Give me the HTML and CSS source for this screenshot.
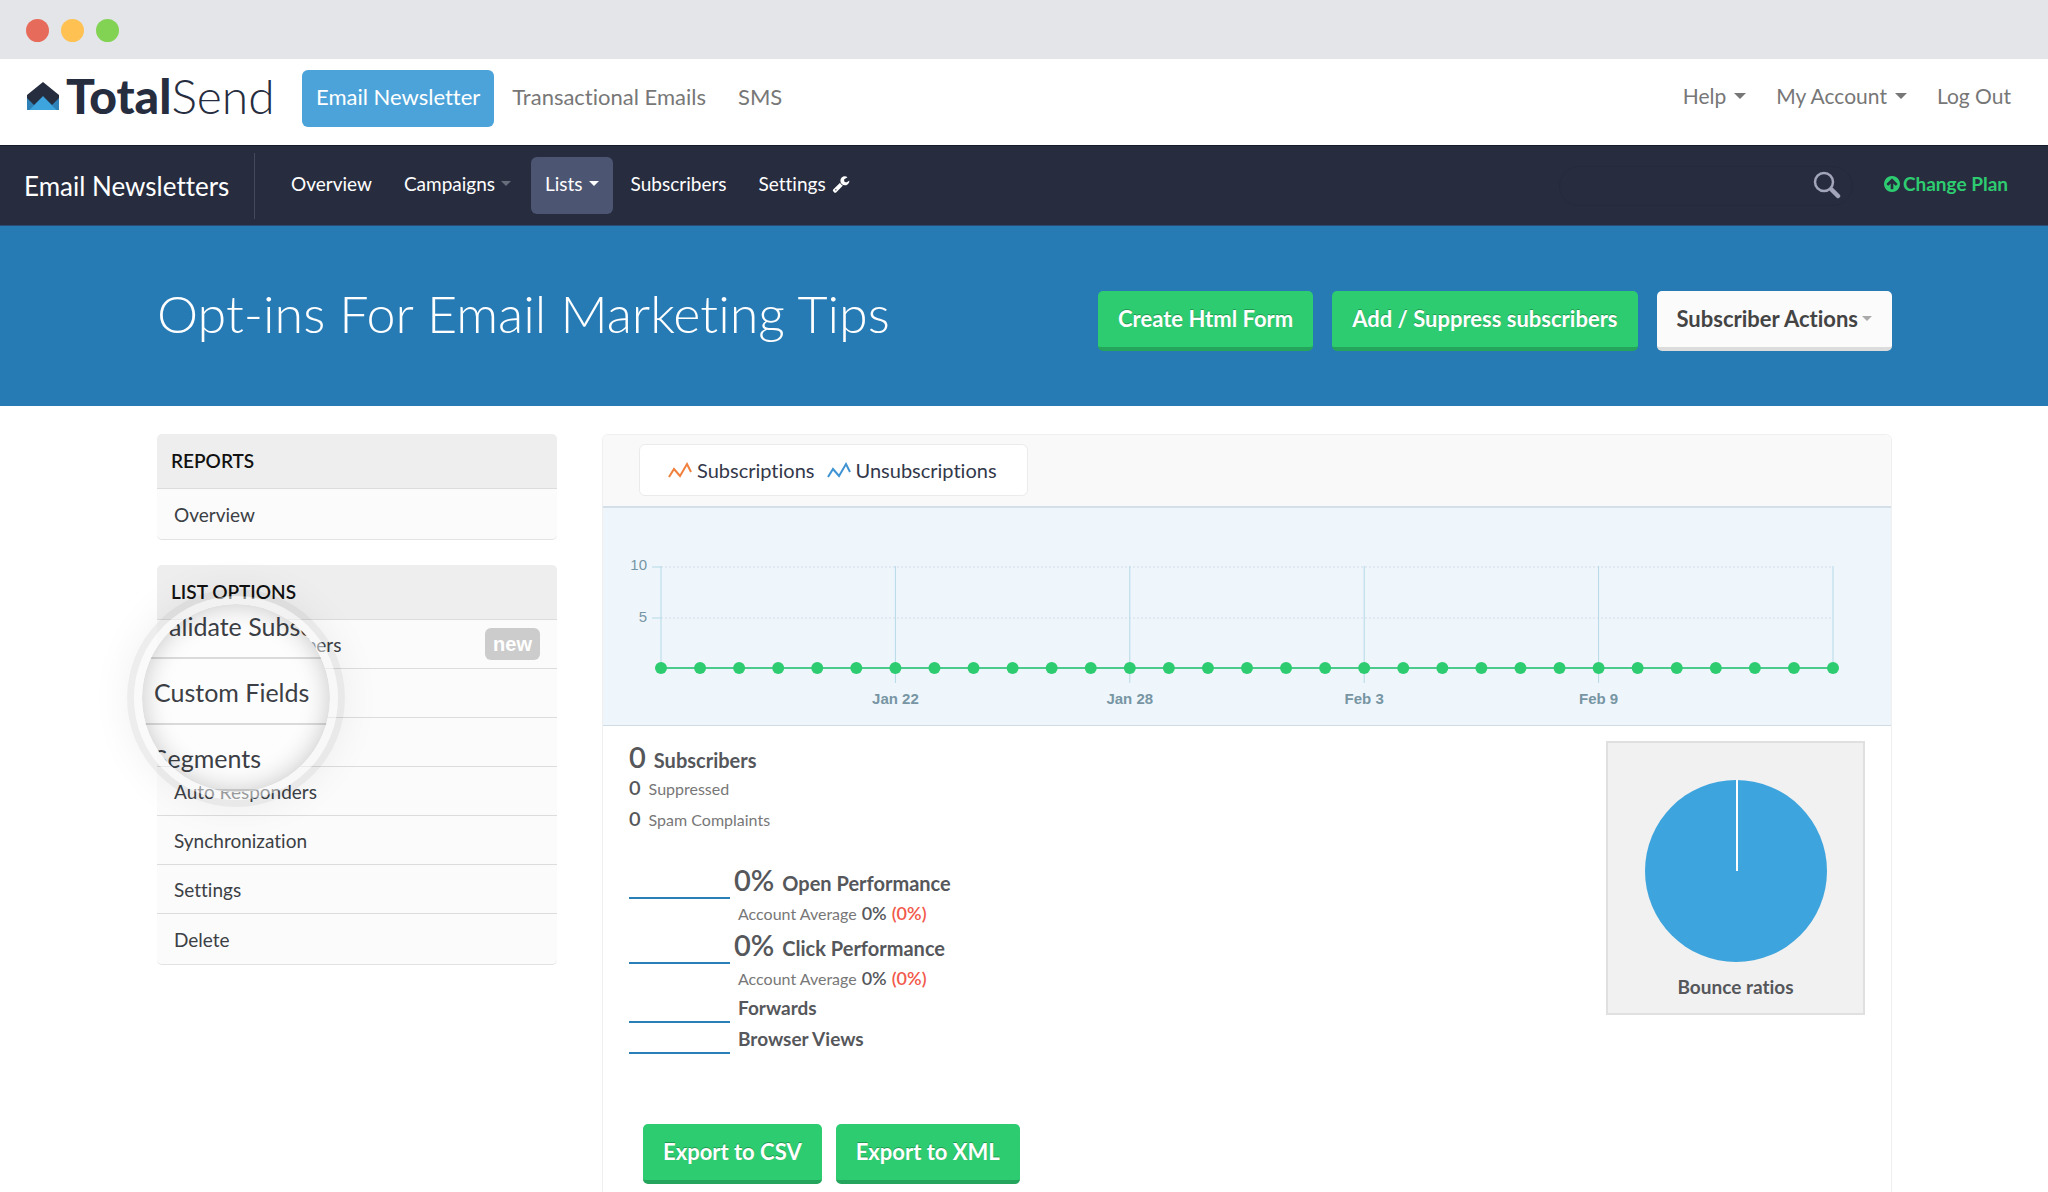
FILE: index.html
```html
<!DOCTYPE html>
<html lang="en">
<head>
<meta charset="utf-8">
<title>TotalSend - Email Newsletters</title>
<link rel="stylesheet" href="styles.css">
</head>
<body>
<div class="chrome"><span class="dot dot-red"></span><span class="dot dot-yellow"></span><span class="dot dot-green"></span></div>

<header class="topbar">
  <a class="logo" href="#">
    <svg class="logo-mark" viewBox="0 0 32 28" aria-hidden="true">
      <path fill="#2f82b8" d="M0 14h32v14H0z"/>
      <path fill="#262d3f" d="M16 0 32 13v3l-7 7-9-9-9 9-7-7v-3z"/>
      <path fill="#3ea4dd" d="M16 14.500 29.500 28h-27z"/>
    </svg>
    <span class="logo-text"><b>Total</b>Send</span>
  </a>
  <nav class="products">
    <a class="product active" href="#">Email Newsletter</a>
    <a class="product" href="#">Transactional Emails</a>
    <a class="product" href="#">SMS</a>
  </nav>
  <nav class="account">
    <a href="#">Help <i class="caret"></i></a>
    <a href="#">My Account <i class="caret"></i></a>
    <a href="#">Log Out</a>
  </nav>
</header>

<div class="navbar">
  <a class="brand" href="#">Email Newsletters</a>
  <nav class="menu">
    <a href="#">Overview</a>
    <a href="#">Campaigns <i class="caret dim"></i></a>
    <a class="active" href="#">Lists <i class="caret"></i></a>
    <a href="#">Subscribers</a>
    <a href="#">Settings
      <svg class="wrench" viewBox="0 0 1792 1792" aria-hidden="true"><path fill="currentColor" d="M448 1472q0-26-19-45t-45-19-45 19-19 45 19 45 45 19 45-19 19-45zm644-420l-682 682q-37 37-90 37-52 0-91-37l-106-108q-38-36-38-90 0-53 38-91l681-681q39 98 114.500 173.500t173.500 114.500zm634-435q0 39-23 106-47 134-164.500 217.500t-258.500 83.500q-185 0-316.500-131.500t-131.500-316.500 131.500-316.500 316.500-131.500q58 0 121.500 16.500t107.500 46.500q16 11 16 28t-16 28l-293 169v224l193 107q5-3 79-48.500t135.500-81 70.500-35.500q15 0 23.500 10t8.500 25z"/></svg>
    </a>
  </nav>
  <form class="search">
    <input type="search" aria-label="Search">
    <button type="button" aria-label="Search">
      <svg viewBox="0 0 28 28" aria-hidden="true"><circle cx="11" cy="11" r="9" fill="none" stroke="#a3a6bb" stroke-width="2.500"/><path d="M18.500 18.500 25 25" stroke="#a3a6bb" stroke-width="4.500" stroke-linecap="round"/></svg>
    </button>
  </form>
  <a class="plan" href="#">
    <svg viewBox="128 128 1536 1536" aria-hidden="true"><path fill="currentColor" d="M1412 895q0-27-18-45l-362-362-91-91q-18-18-45-18t-45 18l-91 91-362 362q-18 18-18 45t18 45l91 91q18 18 45 18t45-18l189-189v502q0 26 19 45t45 19h128q26 0 45-19t19-45v-502l189 189q19 19 45 19t45-19l91-91q18-18 18-45zm252 1q0 209-103 385.500t-279.500 279.500-385.500 103-385.500-103-279.500-279.500-103-385.500 103-385.500 279.500-279.500 385.500-103 385.500 103 279.500 279.500 103 385.500z"/></svg>
    Change Plan
  </a>
</div>

<section class="hero">
  <h1>Opt-ins For Email Marketing Tips</h1>
  <div class="actions">
    <button class="btn green" type="button">Create Html Form</button>
    <button class="btn green" type="button">Add / Suppress subscribers</button>
    <button class="btn light" type="button">Subscriber Actions <i class="caret"></i></button>
  </div>
</section>

<div class="content">
  <aside class="sidebar">
    <section class="box">
      <h2>REPORTS</h2>
      <ul><li><a href="#">Overview</a></li></ul>
    </section>
    <section class="box options">
      <h2>LIST OPTIONS</h2>
      <ul>
        <li><a href="#">Validate Subscribers <span class="badge">new</span></a></li>
        <li><a href="#">Custom Fields</a></li>
        <li><a href="#">Segments</a></li>
        <li><a href="#">Auto Responders</a></li>
        <li><a href="#">Synchronization</a></li>
        <li><a href="#">Settings</a></li>
        <li><a href="#">Delete</a></li>
      </ul>
      <div class="lens" aria-hidden="true">
        <div class="glass">
          <div class="lens-row">Validate Subscribers</div>
          <div class="lens-row">Custom Fields</div>
          <div class="lens-row">Segments</div>
        </div>
      </div>
    </section>
  </aside>

  <main class="panel">
    <div class="panel-head">
      <div class="legend">
        <span class="key"><svg viewBox="0 0 24 18" aria-hidden="true"><path d="M1 16 6 8l6 7 7-12 4 8" fill="none" stroke="#f0803c" stroke-width="2"/></svg>Subscriptions</span>
        <span class="key"><svg viewBox="0 0 24 18" aria-hidden="true"><path d="M1 16 6 8l6 7 7-12 4 8" fill="none" stroke="#3f93d2" stroke-width="2"/></svg>Unsubscriptions</span>
      </div>
    </div>

    <div class="chart">
      <svg class="plot" role="img" aria-label="Subscriptions per day">
        <g class="grid"><line x1="0" x2="100%" y1="1" y2="1"/><line x1="0" x2="100%" y1="52" y2="52"/></g>
        <g class="axis">
          <line x1="-9" x2="0" y1="1" y2="1"/><line x1="-9" x2="0" y1="52" y2="52"/>
          <line x1="0" x2="0" y1="0" y2="102"/>
          <line x1="20%" x2="20%" y1="0" y2="117"/>
          <line x1="40%" x2="40%" y1="0" y2="117"/>
          <line x1="60%" x2="60%" y1="0" y2="117"/>
          <line x1="80%" x2="80%" y1="0" y2="117"/>
          <line x1="100%" x2="100%" y1="0" y2="102"/>
        </g>
        <line class="series" x1="0" x2="100%" y1="102" y2="102"/>
        <g class="points">
          <circle cx="0" cy="102" r="6"/><circle cx="3.333%" cy="102" r="6"/><circle cx="6.667%" cy="102" r="6"/><circle cx="10%" cy="102" r="6"/><circle cx="13.333%" cy="102" r="6"/><circle cx="16.667%" cy="102" r="6"/>
          <circle cx="20%" cy="102" r="6"/><circle cx="23.333%" cy="102" r="6"/><circle cx="26.667%" cy="102" r="6"/><circle cx="30%" cy="102" r="6"/><circle cx="33.333%" cy="102" r="6"/><circle cx="36.667%" cy="102" r="6"/>
          <circle cx="40%" cy="102" r="6"/><circle cx="43.333%" cy="102" r="6"/><circle cx="46.667%" cy="102" r="6"/><circle cx="50%" cy="102" r="6"/><circle cx="53.333%" cy="102" r="6"/><circle cx="56.667%" cy="102" r="6"/>
          <circle cx="60%" cy="102" r="6"/><circle cx="63.333%" cy="102" r="6"/><circle cx="66.667%" cy="102" r="6"/><circle cx="70%" cy="102" r="6"/><circle cx="73.333%" cy="102" r="6"/><circle cx="76.667%" cy="102" r="6"/>
          <circle cx="80%" cy="102" r="6"/><circle cx="83.333%" cy="102" r="6"/><circle cx="86.667%" cy="102" r="6"/><circle cx="90%" cy="102" r="6"/><circle cx="93.333%" cy="102" r="6"/><circle cx="96.667%" cy="102" r="6"/><circle cx="100%" cy="102" r="6"/>
        </g>
        <g class="ylabels"><text x="-14" y="4">10</text><text x="-14" y="56">5</text></g>
        <g class="xlabels"><text x="20%" y="138">Jan 22</text><text x="40%" y="138">Jan 28</text><text x="60%" y="138">Feb 3</text><text x="80%" y="138">Feb 9</text></g>
      </svg>
    </div>

    <div class="report">
      <div class="stats">
        <div class="totals">
          <p class="stat"><b class="num big">0</b><b class="name">Subscribers</b></p>
          <p class="stat"><b class="num">0</b><span class="small">Suppressed</span></p>
          <p class="stat"><b class="num">0</b><span class="small">Spam Complaints</span></p>
        </div>
        <div class="performance">
          <p class="stat tall lined"><b class="num big">0%</b><b class="name">Open Performance</b></p>
          <p class="stat average"><span class="small">Account Average</span> <b class="num">0%</b> <b class="num red">(0%)</b></p>
          <p class="stat tall lined"><b class="num big">0%</b><b class="name">Click Performance</b></p>
          <p class="stat average"><span class="small">Account Average</span> <b class="num">0%</b> <b class="num red">(0%)</b></p>
          <p class="stat lined plain"><b class="name">Forwards</b></p>
          <p class="stat lined plain"><b class="name">Browser Views</b></p>
        </div>
        <div class="exports">
          <button class="btn green" type="button">Export to CSV</button>
          <button class="btn green" type="button">Export to XML</button>
        </div>
      </div>
      <figure class="bounce">
        <svg viewBox="0 0 182 182" aria-hidden="true"><circle cx="91" cy="91" r="91" fill="#3ea4dd"/><path d="M92 0v91" stroke="#fff" stroke-width="2"/></svg>
        <figcaption>Bounce ratios</figcaption>
      </figure>
    </div>
  </main>
</div>
</body>
</html>
```
FILE: styles.css
```css
* { box-sizing: border-box; }

html { height: 100%; overflow: hidden; }

body {
  margin: 0;
  min-height: 100%;
  background: #fff;
  color: #3c3f45;
  font-family: Lato, "Open Sans", sans-serif;
  font-size: 19px;
  font-variant-ligatures: none;
}

a { color: inherit; text-decoration: none; }
h1, h2, p, ul, figure { margin: 0; padding: 0; }
ul { list-style: none; }
svg { display: block; flex: none; }

.caret {
  display: inline-block;
  flex: none;
  border: 5px solid transparent;
  border-top-color: currentColor;
  border-bottom: 0;
}

/* Window frame */
.chrome {
  display: flex;
  align-items: center;
  gap: 12px;
  height: 59px;
  padding: 1px 0 0 26px;
  background: #e3e5e9;
}
.dot { width: 23px; height: 23px; border-radius: 50%; }
.dot-red { background: #e76b5a; }
.dot-yellow { background: #fec152; }
.dot-green { background: #82d253; }

/* Product bar */
.topbar {
  display: flex;
  align-items: flex-start;
  height: 86px;
  padding: 11px 37px 0 27px;
  color: #777;
  font-size: 22px;
  line-height: 54px;
}
.logo { display: flex; align-items: center; gap: 7px; width: 275px; height: 52px; color: #262d3f; }
.logo-mark { width: 32px; height: 28px; }
.logo-text { font-size: 48px; font-weight: 300; line-height: 52px; }
.logo-text b { font-weight: 900; }
.products { display: flex; }
.product { height: 57px; padding: 0 16px; border-radius: 6px; }
.product.active { padding: 0 14px; margin-right: 2px; background: #4ca3d9; color: #fff; }
.account { display: flex; gap: 30px; margin-left: auto; font-size: 21px; line-height: 52px; }
.account a { display: flex; align-items: center; gap: 8px; }
.account .caret { border-width: 6px 6px 0; }

/* Section bar */
.navbar {
  display: flex;
  align-items: center;
  height: 81px;
  padding: 0 40px 0 24px;
  border-top: 1px solid #131a2c;
  border-bottom: 1px solid #2a4d74;
  background: #272d3f;
  color: #fff;
}
.brand { width: 231px; border-right: 1px solid #444a5c; font-size: 26px; line-height: 66px; }
.menu { display: flex; margin-left: 20px; }
.menu a { display: flex; align-items: center; gap: 6px; height: 57px; padding: 0 16px 4px; border-radius: 6px; }
.menu .active { padding: 0 14px 4px; margin: 0 2px 0 4px; background: #4c5672; }
.dim { color: #686d7c; }
.wrench { width: 18px; height: 18px; }
.search { display: flex; width: 294px; height: 40px; margin-left: auto; border: 1px solid #252a3b; border-radius: 20px; }
.search input { flex: 1; min-width: 0; border: 0; background: none; outline: 0; color: #fff; }
.search button { margin: 0 11px 2px 0; padding: 0; border: 0; background: none; }
.search svg { width: 28px; height: 28px; }
.plan { display: flex; align-items: center; gap: 3px; margin-left: 31px; padding-bottom: 4px; color: #2ecc71; font-weight: 700; }
.plan svg { width: 16px; height: 16px; }

/* Page heading */
.hero {
  display: flex;
  justify-content: space-between;
  align-items: center;
  height: 180px;
  padding: 0 156px 0 157px;
  background: #277bb5;
}
.hero h1 { padding-bottom: 6px; color: #fff; font-size: 52px; font-weight: 300; line-height: 60px; }
.actions { display: flex; gap: 19px; padding-top: 9px; }
.btn {
  display: inline-flex;
  align-items: center;
  gap: 4px;
  height: 60px;
  padding: 0 20px;
  border: 0;
  border-bottom: 4px solid;
  border-radius: 5px;
  font: 700 22px/56px Lato, "Open Sans", sans-serif;
  font-variant-ligatures: none;
  white-space: nowrap;
}
.green { border-color: #25a55b; background: #2ecc71; color: #fff; text-shadow: 0 -1px 0 #1f9a50; }
.light { border-color: #dcdcdc; background: #fbfbfb; color: #444; }
.light .caret { color: #aaa; }

/* Body */
.content {
  display: flex;
  align-items: flex-start;
  gap: 45px;
  padding: 28px 156px 0 157px;
}
.sidebar { display: grid; flex: none; gap: 25px; width: 400px; }
.box { position: relative; border-bottom: 1px solid #e2e2e2; border-radius: 5px; background: #fbfbfb; }
.box h2 {
  padding: 0 14px;
  border-bottom: 1px solid #dcdcdc;
  border-radius: 5px 5px 0 0;
  background: #eee;
  color: #111;
  font-size: 19px;
  font-weight: 600;
  line-height: 54px;
}
.box li + li { border-top: 1px solid #dcdcdc; }
.box li a { display: flex; justify-content: space-between; align-items: center; min-height: 48px; padding: 0 17px; }
.box li:last-child a { min-height: 50px; }
.badge {
  padding: 0 8px;
  border-radius: 6px;
  background: #ccc;
  color: #fff;
  font: 700 20px/32px "Liberation Sans", Arial, sans-serif;
}

/* Magnifier over the options list */
.lens {
  position: absolute;
  top: 24px;
  left: -30px;
  padding: 8px;
  border: 7px solid rgba(0, 0, 0, 0.07);
  border-radius: 50%;
  background: rgba(245, 245, 245, 0.5);
  background-clip: padding-box;
  box-shadow: 0 0 40px rgba(0, 0, 0, 0.06);
}
.glass {
  display: flex;
  flex-direction: column;
  justify-content: center;
  position: relative;
  width: 188px;
  height: 188px;
  padding-bottom: 12px;
  overflow: hidden;
  border-radius: 50%;
  background: #fdfdfd;
}
.glass::after { content: ""; position: absolute; inset: 0; border-radius: 50%; box-shadow: inset 0 0 26px rgba(0, 0, 0, 0.22); }
.lens-row { flex: none; height: 66px; padding-left: 12px; border-bottom: 2px solid #dadada; font-size: 25px; line-height: 66px; white-space: nowrap; }

/* Report panel */
.panel { flex: 1; min-width: 0; border: 1px solid #efefef; border-radius: 6px; }
.panel-head { padding: 9px 36px 10px; border-radius: 6px 6px 0 0; background: #f9f9f9; }
.legend {
  display: inline-flex;
  gap: 12px;
  padding: 0 30px 0 28px;
  border: 1px solid #ebebeb;
  border-radius: 6px;
  background: #fff;
  color: #33384a;
  font-size: 20px;
  line-height: 50px;
  vertical-align: top;
}
.key { display: flex; align-items: center; gap: 5px; }
.key svg { width: 24px; height: 18px; }

.chart { padding: 58px 58px 57px; border-top: 2px solid #d5dfe9; border-bottom: 1px solid #cfdbe5; background: #eef6fc; }
.plot { width: 100%; height: 102px; overflow: visible; }
.grid { stroke: #d3dde6; stroke-dasharray: 2 2; }
.axis { stroke: #b4d9e6; stroke-width: 1; }
.series { stroke: #4cc98c; stroke-width: 2; }
.points { fill: #2ecc71; }
.ylabels, .xlabels { fill: #7795a3; font: 15px "Liberation Sans", Arial, sans-serif; }
.ylabels { text-anchor: end; }
.xlabels { font-weight: 700; text-anchor: middle; }

.report { display: flex; justify-content: space-between; align-items: flex-start; padding: 15px 26px 29px; }
.totals { padding-bottom: 28px; }
.stat { display: flex; align-items: baseline; height: 31px; line-height: 31px; color: #55575b; }
.num { margin-right: 8px; font-size: 20px; font-weight: 600; }
.big { font-size: 29px; }
.name { font-size: 20px; font-weight: 700; }
.small { color: #777; font-size: 16px; }
.performance .stat { padding-left: 109px; }
.performance .tall { height: 37px; padding-left: 105px; line-height: 36px; }
.performance .average { height: 28px; line-height: 29px; }
.average .num { margin: 0 0 0 5px; font-size: 18px; }
.average .red { color: #f2594b; }
.performance .plain { line-height: 32px; }
.plain .name { font-size: 19px; }
.lined { background: linear-gradient(#2980b9, #2980b9) left bottom / 101px 2px no-repeat; }
.exports { display: flex; gap: 14px; margin-top: 70px; padding-left: 14px; }

.bounce {
  display: grid;
  justify-items: center;
  width: 259px;
  padding: 37px 0 2px;
  border: 2px solid #e0e0e0;
  background: #f1f1f1;
  color: #55575b;
  font-size: 19px;
  font-weight: 700;
  line-height: 49px;
}
.bounce svg { width: 182px; height: 182px; }
```
